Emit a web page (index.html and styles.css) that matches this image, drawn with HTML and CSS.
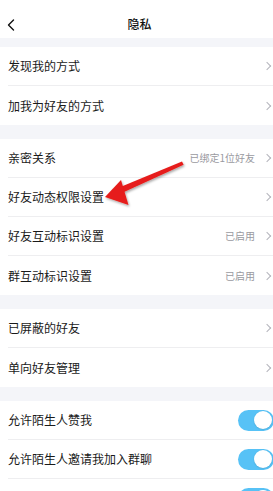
FILE: index.html
```html
<!DOCTYPE html>
<html lang="zh-CN">
<head>
<meta charset="utf-8">
<title>隐私</title>
<link rel="stylesheet" href="styles.css">
</head>
<body>
<div class="page">
  <header class="nav">
    <svg class="back" width="8" height="12" viewBox="0 0 8 12"><path d="M6.5 1 L1.5 6 L6.5 11" fill="none" stroke="#111" stroke-width="1.4" stroke-linecap="round" stroke-linejoin="round"/></svg>
    <h1 class="title">隐私</h1>
  </header>

  <div class="gap gap-first"></div>
  <section class="group">
    <div class="row"><span class="label">发现我的方式</span><span class="chev"></span></div>
    <div class="row"><span class="label">加我为好友的方式</span><span class="chev"></span></div>
  </section>

  <div class="gap"></div>
  <section class="group">
    <div class="row"><span class="label">亲密关系</span><span class="value">已绑定1位好友</span><span class="chev"></span></div>
    <div class="row"><span class="label">好友动态权限设置</span><span class="chev"></span></div>
    <div class="row"><span class="label">好友互动标识设置</span><span class="value">已启用</span><span class="chev"></span></div>
    <div class="row"><span class="label">群互动标识设置</span><span class="value">已启用</span><span class="chev"></span></div>
  </section>

  <div class="gap"></div>
  <section class="group">
    <div class="row"><span class="label">已屏蔽的好友</span><span class="chev"></span></div>
    <div class="row"><span class="label">单向好友管理</span><span class="chev"></span></div>
  </section>

  <div class="gap"></div>
  <section class="group">
    <div class="row"><span class="label">允许陌生人赞我</span><span class="toggle"><span class="knob"></span></span></div>
    <div class="row"><span class="label">允许陌生人邀请我加入群聊</span><span class="toggle"><span class="knob"></span></span></div>
    <div class="row"><span class="label"></span><span class="toggle"><span class="knob"></span></span></div>
  </section>

  <svg class="arrow" width="273" height="491" viewBox="0 0 273 491">
    <defs>
      <filter id="sh" x="-20%" y="-20%" width="140%" height="140%">
        <feDropShadow dx="1" dy="1.5" stdDeviation="1.2" flood-color="#000" flood-opacity="0.35"/>
      </filter>
    </defs>
    <g filter="url(#sh)" fill="#e61e1a">
      <polygon points="182,161.6 183.6,164.8 124,192 121.6,186.4"/>
      <polygon points="105,197 121,180 128.5,205"/>
    </g>
  </svg>
</div>
</body>
</html>
```
FILE: styles.css
```css
* { box-sizing: border-box; margin: 0; padding: 0; }
html, body { background: #f4f5f9; }
body {
  font-family: "Noto Sans CJK SC", "Noto Sans", sans-serif;
  color: #1a1a1a;
}
.page {
  position: relative;
  width: 273px;
  height: 491px;
  overflow: hidden;
  background: #f4f5f9;
}
.nav {
  position: relative;
  height: 38px;
  padding-top: 10px;
  background: #fff;
  display: flex;
  align-items: center;
  justify-content: center;
}
.back {
  position: absolute;
  left: 7px;
  top: 19px;
}
.title {
  font-size: 12px;
  font-weight: 500;
  line-height: 16px;
  color: #111;
  padding-left: 6px;
}
.gap { height: 14px; }
.gap-first { height: 9px; }
.group { background: #fff; padding-left: 8px; }
.row {
  height: 39px;
  display: flex;
  align-items: center;
  border-bottom: 1px solid #eeeef0;
  padding-right: 1px;
}
.row:last-child { border-bottom: none; }
.label {
  flex: 1;
  font-size: 12px;
  line-height: 16px;
  color: #1a1a1a;
}
.value {
  font-size: 10px;
  line-height: 14px;
  color: #9a9a9f;
  margin-right: 9px;
}
.chev {
  width: 6px;
  height: 6px;
  border-top: 1px solid #b4b4bc;
  border-right: 1px solid #b4b4bc;
  transform: rotate(45deg);
  margin-right: 2px;
}
.toggle {
  width: 36px;
  height: 21px;
  border-radius: 11px;
  background: #57c2f6;
  position: relative;
  margin-right: -2px;
  flex: none;
}
.knob {
  position: absolute;
  right: 2px;
  top: 1.5px;
  width: 18px;
  height: 18px;
  border-radius: 50%;
  background: #fff;
  box-shadow: 0 0.5px 1.5px rgba(0,0,0,0.15);
}
.arrow {
  position: absolute;
  left: 0;
  top: 0;
  pointer-events: none;
}
```
